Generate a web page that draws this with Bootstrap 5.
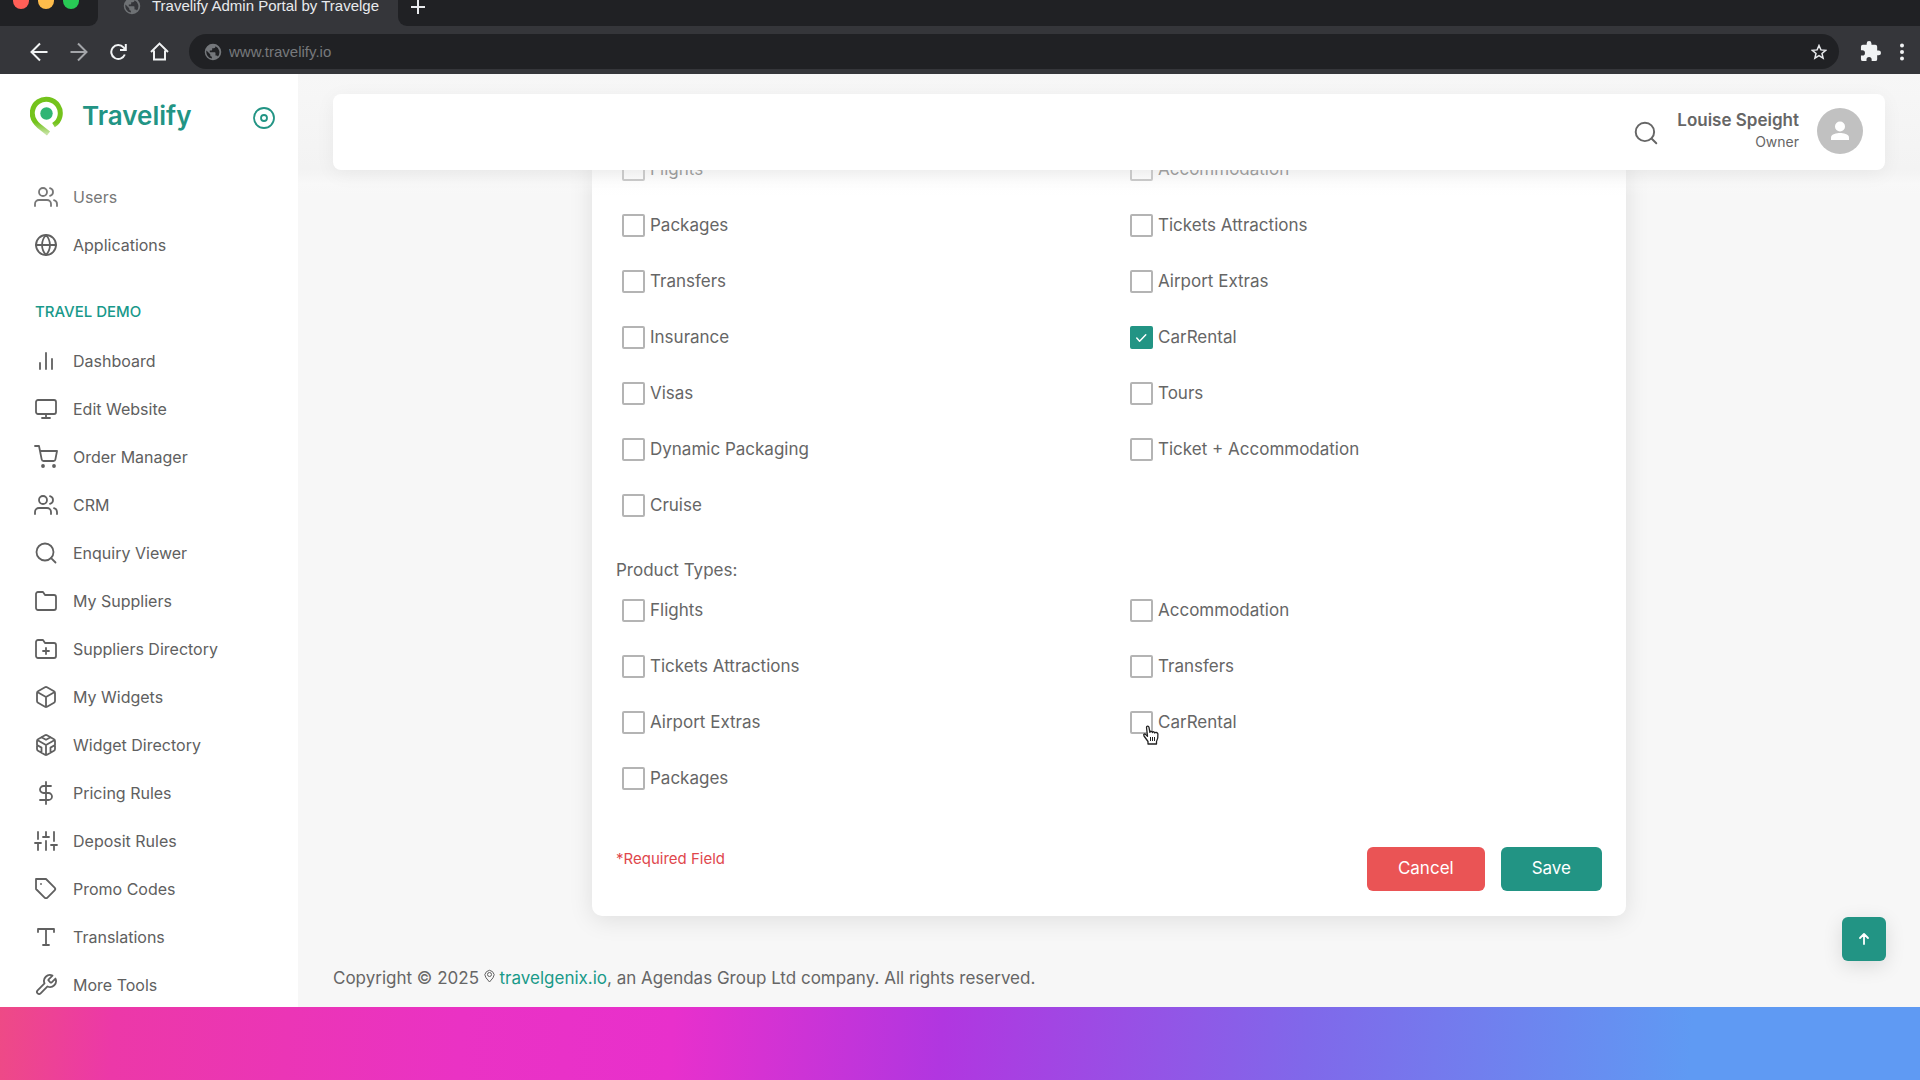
<!DOCTYPE html>
<html lang="en">
<head>
<meta charset="utf-8">
<meta name="viewport" content="width=device-width, initial-scale=1">
<title>Travelify Admin Portal by Travelgenix</title>
<link href="https://cdn.jsdelivr.net/npm/bootstrap@5.3.0/dist/css/bootstrap.min.css" rel="stylesheet">
<style>
  :root { --teal: #229484; --ink: #666; }
  body { font-family: Inter, "Noto Sans", sans-serif; font-size: 17px; line-height: 24px; color: var(--ink); background: #f7f7f7; }
  svg { display: block; flex: none; }
  .stroke-icon { fill: none; stroke: currentColor; stroke-width: 1.8; stroke-linecap: round; stroke-linejoin: round; }

  /* Browser frame */
  .browser { font-family: "Liberation Sans", Arial, sans-serif; background: #35363a; color: #e8eaed; }
  .tab-strip { height: 26px; }
  .strip-start { width: 98px; background: #202124; border-bottom-right-radius: 9px; overflow: hidden; padding-left: 13px; gap: 9px; }
  .strip-end { background: #202124; border-bottom-left-radius: 9px; padding: 0 0 14px 13px; }
  .light { width: 16px; height: 16px; border-radius: 50%; margin-top: -7px; }
  .page-tab { width: 300px; padding: 0 12px 14px 25px; gap: 11px; font-size: 15px; white-space: nowrap; }
  .page-tab span { line-height: 20px; }
  .strip-end button, .tool-row button { background: none; border: 0; padding: 0; color: inherit; }
  .tool-row { height: 48px; padding: 4px 13px 0 30px; }
  .nav-keys { gap: 22px; }
  .address { height: 35px; border-radius: 18px; background: #202124; margin-left: 20px; padding: 0 12px 0 15px; gap: 7px; }
  .address input { background: none; border: 0; outline: 0; padding: 0; font-size: 15px; color: #77797c; }
  .ext { margin-left: 21px; }

  /* Application frame */
  .app { overflow: hidden; }
  .side { width: 298px; background: #fff; flex: none; }
  .brand-row { padding: 22px 22px 0 30px; height: 88px; }
  .brand-name { color: var(--teal); font-size: 26px; line-height: 32px; font-weight: 600; text-decoration: none; margin: 4px 0 0 18px; }
  .brand-row button { background: none; border: 0; padding: 0; margin-top: 10px; color: var(--teal); }
  .side-link { height: 48px; padding: 0 0 0 34px; gap: 15px; color: #606060; font-size: 16px; }
  .side-link:hover { color: var(--teal); }
  .side-link.dim { color: #777; margin-top: 11px; }
  .side-title { color: #18998a; font-size: 15px; line-height: 24px; font-weight: 500; padding: 31px 0 13px 35px; margin: 0; }

  .top-wrap { padding: 20px 35px 26px; background: linear-gradient(#f7f7f7 0%, #f5f5f5 40%, rgba(238,238,238,.45) 78%, rgba(250,250,250,.3) 90%, rgba(255,255,255,0) 100%); z-index: 5; }
  .top-card { height: 76px; background: #fff; border-radius: 8px; padding: 0 22px 3px 0; box-shadow: 0 4px 20px rgba(0,0,0,.05); }
  .person { margin-left: 18px; }
  .person-name { font-size: 17px; font-weight: 600; line-height: 22px; }
  .person-role { font-size: 14px; line-height: 22px; }
  .avatar { width: 46px; height: 46px; background: #c1c1c1; border-radius: 50%; margin-left: 18px; }

  .pane { padding: 67px 35px 0; }
  .form-panel { width: 67%; max-width: 1034px; min-width: 640px; background: #fff; border-radius: 0 0 10px 10px; padding: 0 24px 25px; box-shadow: 0 4px 25px rgba(0,0,0,.1); }
  .choices { --bs-gutter-x: 30px; }
  .choice { height: 56px; min-height: 0; margin: 0; padding: 0 0 0 6px; gap: 5px; }
  .choice .form-check-input { float: none; width: 23px; height: 23px; margin: 0; border: 2px solid #b4b4b4; border-radius: 2px; }
  .choice .form-check-input:checked { background-color: var(--teal); border-color: var(--teal); background-size: 19px; background-image: url("data:image/svg+xml,%3csvg xmlns='http://www.w3.org/2000/svg' viewBox='0 0 20 20'%3e%3cpath fill='none' stroke='%23fff' stroke-linecap='round' stroke-linejoin='round' stroke-width='1.500' d='m5 10.500 3 3.500 6.500-7'/%3e%3c/svg%3e"); }
  .group-title { margin-top: 25px; }
  .form-end { margin-top: 41px; }
  .note { color: #e0474c; font-size: 15px; line-height: 24px; }
  .act { height: 44px; padding: 0 31px; border-radius: 6px; font-size: 17px; color: #fff; border: 0; }
  .act-cancel, .act-cancel:hover { background: #ea5455; color: #fff; }
  .act-save, .act-save:hover { background: var(--teal); color: #fff; }
  .foot { margin-top: 50px; padding-bottom: 17px; }
  .foot a { color: #199a89; text-decoration: none; }
  .foot svg { display: inline-block; vertical-align: 1px; }
  .to-top { right: 34px; bottom: 46px; width: 44px; height: 44px; border: 0; border-radius: 6px; background: var(--teal); color: #fff; box-shadow: 0 5px 20px rgba(0,0,0,.12); }
  .hand { left: 18px; top: 31px; z-index: 2; }
  .band { height: 73px; background: linear-gradient(94deg, #ee4a86 0%, #ec38a8 6%, #ea32c4 24%, #e830cc 35%, #b136e0 49%, #8068ea 68%, #5f9af3 88%); }
</style>
</head>
<body class="vh-100 d-flex flex-column overflow-hidden">

<header class="browser">
  <div class="tab-strip d-flex">
    <div class="strip-start d-flex">
      <span class="light" style="background:#ff5f57"></span>
      <span class="light" style="background:#febc4b"></span>
      <span class="light" style="background:#28ca55"></span>
    </div>
    <div class="page-tab d-flex align-items-center">
      <svg width="18" height="18" viewBox="0 0 24 24" fill="#6e7174"><path d="M12 1a11 11 0 1 0 0 22 11 11 0 0 0 0-22zm-1.500 19.800A9 9 0 0 1 3.300 10l5 5v1.200q.2 1.900 2.200 2zm8-2.700a2.200 2.200 0 0 0-2.100-1.500h-1.100v-3.300a1 1 0 0 0-1-1H7.700v-2.200h2.200a1 1 0 0 0 1-1V6.900h2.200q2.200-.2 2.200-2.200v-.4a9 9 0 0 1 3.200 13.800z"/></svg>
      <span>Travelify Admin Portal by Travelge</span>
    </div>
    <div class="strip-end flex-grow-1 d-flex">
      <button type="button" aria-label="New tab"><svg width="14" height="14" viewBox="0 0 14 14" stroke="#e8eaed" stroke-width="2"><path d="M7 0v14M0 7h14"/></svg></button>
    </div>
  </div>
  <div class="tool-row d-flex align-items-start">
    <div class="d-flex align-items-center flex-grow-1 mt-1">
      <div class="nav-keys d-flex align-items-center">
        <button type="button" aria-label="Back"><svg width="18" height="20" viewBox="0 0 18 20" fill="none" stroke="#f1f3f4" stroke-width="2"><path d="M17.500 10H2M10 1.500 1.500 10l8.500 8.500"/></svg></button>
        <button type="button" aria-label="Forward"><svg width="18" height="20" viewBox="0 0 18 20" fill="none" stroke="#a3a5a9" stroke-width="2"><path d="M.5 10H16M8 1.500l8.500 8.500L8 18.500"/></svg></button>
        <button type="button" aria-label="Reload"><svg width="18" height="18" viewBox="0 0 18 18" fill="none" stroke="#f1f3f4" stroke-width="2"><path d="M14.800 11.500A7 7 0 1 1 13.500 4.300l1.500 1.700"/><path d="M15.800 1v6H10"/></svg></button>
        <button type="button" aria-label="Home"><svg width="19" height="19" viewBox="0 0 19 19" fill="none" stroke="#f1f3f4" stroke-width="2"><path d="M1 10 9.500 1.600 18 10M4 8.500V17.500h11V8.500"/></svg></button>
      </div>
      <div class="address d-flex align-items-center flex-grow-1">
        <svg width="18" height="18" viewBox="0 0 24 24" fill="#74777b"><path d="M12 1a11 11 0 1 0 0 22 11 11 0 0 0 0-22zm-1.500 19.800A9 9 0 0 1 3.300 10l5 5v1.200q.2 1.900 2.200 2zm8-2.700a2.200 2.200 0 0 0-2.100-1.500h-1.100v-3.300a1 1 0 0 0-1-1H7.700v-2.200h2.200a1 1 0 0 0 1-1V6.900h2.200q2.200-.2 2.200-2.200v-.4a9 9 0 0 1 3.200 13.800z"/></svg>
        <input class="flex-grow-1" type="text" aria-label="Address" value="www.travelify.io">
        <svg width="16" height="16" viewBox="0 0 16 16" fill="none" stroke="#e8eaed" stroke-width="1.500"><path d="m8 1.500 1.900 4.400 4.800.4L11 9.500l1.100 4.700L8 11.700l-4.100 2.500L5 9.500 1.300 6.300l4.800-.4z"/></svg>
      </div>
      <button type="button" class="ext" aria-label="Extensions"><svg width="21" height="21" viewBox="1 1 22 22" fill="#f1f3f4"><path d="M20.500 11H19V7a2 2 0 0 0-2-2h-4V3.500a2.500 2.500 0 0 0-5 0V5H4a2 2 0 0 0-2 2v3.800h1.500a2.700 2.700 0 0 1 0 5.400H2V20a2 2 0 0 0 2 2h3.800v-1.500a2.700 2.700 0 0 1 5.400 0V22H17a2 2 0 0 0 2-2v-4h1.500a2.500 2.500 0 0 0 0-5z"/></svg></button>
      <button type="button" class="ms-3" aria-label="Menu"><svg width="10" height="18" viewBox="0 0 10 18" fill="#f1f3f4"><circle cx="5" cy="2.500" r="2"/><circle cx="5" cy="9" r="2"/><circle cx="5" cy="15.500" r="2"/></svg></button>
    </div>
  </div>
</header>

<div class="app d-flex flex-grow-1">
  <aside class="side">
    <div class="brand-row d-flex align-items-start">
      <svg width="34" height="41" viewBox="0 0 34 41" fill="none"><defs><linearGradient id="pin" x1="0" y1="0" x2="0" y2="1"><stop offset=".68" stop-color="#74c31c"/><stop offset="1" stop-color="#c4e2a0"/></linearGradient></defs><path d="M23.500 29.200A14 14 0 1 0 5 25.500Q6.500 28 9 30L18.500 37.500" stroke="url(#pin)" stroke-width="5"/><circle cx="16.500" cy="17.500" r="6.200" fill="#2fb574"/></svg>
      <a class="brand-name me-auto" href="#">Travelify</a>
      <button type="button" aria-label="Collapse menu"><svg class="stroke-icon" width="24" height="24" viewBox="0 0 24 24"><circle cx="12" cy="12" r="10"/><circle cx="12" cy="12" r="3"/></svg></button>
    </div>
    <nav class="nav flex-column flex-nowrap" aria-label="Main menu">
      <a class="nav-link side-link dim d-flex align-items-center" href="#"><svg class="stroke-icon" width="24" height="24" viewBox="0 0 24 24"><path d="M17 21v-2a4 4 0 0 0-4-4H5a4 4 0 0 0-4 4v2"/><circle cx="9" cy="7" r="4"/><path d="M23 21v-2a4 4 0 0 0-3-3.870M16 3.130a4 4 0 0 1 0 7.750"/></svg>Users</a>
      <a class="nav-link side-link d-flex align-items-center" href="#"><svg class="stroke-icon" width="24" height="24" viewBox="0 0 24 24"><circle cx="12" cy="12" r="10"/><path d="M2 12h20M12 2a15.300 15.300 0 0 1 4 10 15.300 15.300 0 0 1-4 10 15.300 15.300 0 0 1-4-10 15.300 15.300 0 0 1 4-10z"/></svg>Applications</a>
      <h2 class="side-title">TRAVEL DEMO</h2>
      <a class="nav-link side-link d-flex align-items-center" href="#"><svg class="stroke-icon" width="24" height="24" viewBox="0 0 24 24"><path d="M18 20V10M12 20V4M6 20v-6"/></svg>Dashboard</a>
      <a class="nav-link side-link d-flex align-items-center" href="#"><svg class="stroke-icon" width="24" height="24" viewBox="0 0 24 24"><rect x="2" y="3" width="20" height="14" rx="2"/><path d="M8 21h8M12 17v4"/></svg>Edit Website</a>
      <a class="nav-link side-link d-flex align-items-center" href="#"><svg class="stroke-icon" width="24" height="24" viewBox="0 0 24 24"><circle cx="9" cy="21" r="1"/><circle cx="20" cy="21" r="1"/><path d="M1 1h4l2.680 13.390a2 2 0 0 0 2 1.610h9.720a2 2 0 0 0 2-1.610L23 6H6"/></svg>Order Manager</a>
      <a class="nav-link side-link d-flex align-items-center" href="#"><svg class="stroke-icon" width="24" height="24" viewBox="0 0 24 24"><path d="M17 21v-2a4 4 0 0 0-4-4H5a4 4 0 0 0-4 4v2"/><circle cx="9" cy="7" r="4"/><path d="M23 21v-2a4 4 0 0 0-3-3.870M16 3.130a4 4 0 0 1 0 7.750"/></svg>CRM</a>
      <a class="nav-link side-link d-flex align-items-center" href="#"><svg class="stroke-icon" width="24" height="24" viewBox="0 0 24 24"><circle cx="11" cy="11" r="8.500"/><path d="m21.500 21.500-4.400-4.400"/></svg>Enquiry Viewer</a>
      <a class="nav-link side-link d-flex align-items-center" href="#"><svg class="stroke-icon" width="24" height="24" viewBox="0 0 24 24"><path d="M22 19a2 2 0 0 1-2 2H4a2 2 0 0 1-2-2V5a2 2 0 0 1 2-2h5l2 3h9a2 2 0 0 1 2 2z"/></svg>My Suppliers</a>
      <a class="nav-link side-link d-flex align-items-center" href="#"><svg class="stroke-icon" width="24" height="24" viewBox="0 0 24 24"><path d="M22 19a2 2 0 0 1-2 2H4a2 2 0 0 1-2-2V5a2 2 0 0 1 2-2h5l2 3h9a2 2 0 0 1 2 2zM12 11v6M9 14h6"/></svg>Suppliers Directory</a>
      <a class="nav-link side-link d-flex align-items-center" href="#"><svg class="stroke-icon" width="24" height="24" viewBox="0 0 24 24"><path d="M21 16V8a2 2 0 0 0-1-1.730l-7-4a2 2 0 0 0-2 0l-7 4A2 2 0 0 0 3 8v8a2 2 0 0 0 1 1.730l7 4a2 2 0 0 0 2 0l7-4A2 2 0 0 0 21 16zM3.270 6.960 12 12.010l8.730-5.050M12 22.080V12"/></svg>My Widgets</a>
      <a class="nav-link side-link d-flex align-items-center" href="#"><svg class="stroke-icon" width="24" height="24" viewBox="0 0 24 24"><path d="M21 16V8a2 2 0 0 0-1-1.730l-7-4a2 2 0 0 0-2 0l-7 4A2 2 0 0 0 3 8v8a2 2 0 0 0 1 1.730l7 4a2 2 0 0 0 2 0l7-4A2 2 0 0 0 21 16zM3.270 6.960 12 12.010l8.730-5.050M12 22.080V12M7.500 4.210l4.500 2.600 4.500-2.600M7.500 19.790V14.600L3 12M21 12l-4.500 2.600v5.190"/></svg>Widget Directory</a>
      <a class="nav-link side-link d-flex align-items-center" href="#"><svg class="stroke-icon" width="24" height="24" viewBox="0 0 24 24"><path d="M12 1v22M17 5H9.500a3.500 3.500 0 0 0 0 7h5a3.500 3.500 0 0 1 0 7H6"/></svg>Pricing Rules</a>
      <a class="nav-link side-link d-flex align-items-center" href="#"><svg class="stroke-icon" width="24" height="24" viewBox="0 0 24 24"><path d="M4 21v-7M4 10V3M12 21v-9M12 8V3M20 21v-5M20 12V3M1 14h6M9 8h6M17 16h6"/></svg>Deposit Rules</a>
      <a class="nav-link side-link d-flex align-items-center" href="#"><svg class="stroke-icon" width="24" height="24" viewBox="0 0 24 24"><path d="m20.590 13.410-7.170 7.170a2 2 0 0 1-2.830 0L2 12V2h10l8.590 8.590a2 2 0 0 1 0 2.820zM7 7h.01"/></svg>Promo Codes</a>
      <a class="nav-link side-link d-flex align-items-center" href="#"><svg class="stroke-icon" width="24" height="24" viewBox="0 0 24 24"><path d="M4 7V4h16v3M9 20h6M12 4v16"/></svg>Translations</a>
      <a class="nav-link side-link d-flex align-items-center" href="#"><svg class="stroke-icon" width="24" height="24" viewBox="0 0 24 24"><path d="M14.700 6.300a1 1 0 0 0 0 1.400l1.600 1.600a1 1 0 0 0 1.400 0l3.770-3.770a6 6 0 0 1-7.940 7.940l-6.910 6.910a2.120 2.120 0 0 1-3-3l6.910-6.910a6 6 0 0 1 7.940-7.940l-3.760 3.760z"/></svg>More Tools</a>
    </nav>
  </aside>

  <main class="flex-grow-1 position-relative overflow-hidden">
    <div class="top-wrap position-absolute top-0 start-0 end-0">
      <div class="top-card d-flex align-items-center justify-content-end">
        <svg class="stroke-icon mt-1" width="26" height="26" viewBox="0 0 24 24"><circle cx="11" cy="11" r="8.500"/><path d="m21.500 21.500-4.400-4.400"/></svg>
        <div class="person text-end">
          <div class="person-name">Louise Speight</div>
          <div class="person-role">Owner</div>
        </div>
        <div class="avatar d-flex align-items-center justify-content-center">
          <svg width="20" height="20" viewBox="0 0 20 20" fill="#fff"><circle cx="10" cy="5.500" r="5"/><path d="M1 19v-2.500C1 13 7 12 10 12s9 1 9 4.500V19z"/></svg>
        </div>
      </div>
    </div>

    <div class="pane">
      <form class="form-panel mx-auto">
        <div class="row choices">
          <div class="col-6"><div class="form-check choice d-flex align-items-center"><input class="form-check-input" type="checkbox" id="a1"><label for="a1">Flights</label></div></div>
          <div class="col-6"><div class="form-check choice d-flex align-items-center"><input class="form-check-input" type="checkbox" id="a2"><label for="a2">Accommodation</label></div></div>
          <div class="col-6"><div class="form-check choice d-flex align-items-center"><input class="form-check-input" type="checkbox" id="a3"><label for="a3">Packages</label></div></div>
          <div class="col-6"><div class="form-check choice d-flex align-items-center"><input class="form-check-input" type="checkbox" id="a4"><label for="a4">Tickets Attractions</label></div></div>
          <div class="col-6"><div class="form-check choice d-flex align-items-center"><input class="form-check-input" type="checkbox" id="a5"><label for="a5">Transfers</label></div></div>
          <div class="col-6"><div class="form-check choice d-flex align-items-center"><input class="form-check-input" type="checkbox" id="a6"><label for="a6">Airport Extras</label></div></div>
          <div class="col-6"><div class="form-check choice d-flex align-items-center"><input class="form-check-input" type="checkbox" id="a7"><label for="a7">Insurance</label></div></div>
          <div class="col-6"><div class="form-check choice d-flex align-items-center"><input class="form-check-input" type="checkbox" id="a8" checked><label for="a8">CarRental</label></div></div>
          <div class="col-6"><div class="form-check choice d-flex align-items-center"><input class="form-check-input" type="checkbox" id="a9"><label for="a9">Visas</label></div></div>
          <div class="col-6"><div class="form-check choice d-flex align-items-center"><input class="form-check-input" type="checkbox" id="a10"><label for="a10">Tours</label></div></div>
          <div class="col-6"><div class="form-check choice d-flex align-items-center"><input class="form-check-input" type="checkbox" id="a11"><label for="a11">Dynamic Packaging</label></div></div>
          <div class="col-6"><div class="form-check choice d-flex align-items-center"><input class="form-check-input" type="checkbox" id="a12"><label for="a12">Ticket + Accommodation</label></div></div>
          <div class="col-6"><div class="form-check choice d-flex align-items-center"><input class="form-check-input" type="checkbox" id="a13"><label for="a13">Cruise</label></div></div>
        </div>
        <div class="group-title">Product Types:</div>
        <div class="row choices">
          <div class="col-6"><div class="form-check choice d-flex align-items-center"><input class="form-check-input" type="checkbox" id="b1"><label for="b1">Flights</label></div></div>
          <div class="col-6"><div class="form-check choice d-flex align-items-center"><input class="form-check-input" type="checkbox" id="b2"><label for="b2">Accommodation</label></div></div>
          <div class="col-6"><div class="form-check choice d-flex align-items-center"><input class="form-check-input" type="checkbox" id="b3"><label for="b3">Tickets Attractions</label></div></div>
          <div class="col-6"><div class="form-check choice d-flex align-items-center"><input class="form-check-input" type="checkbox" id="b4"><label for="b4">Transfers</label></div></div>
          <div class="col-6"><div class="form-check choice d-flex align-items-center"><input class="form-check-input" type="checkbox" id="b5"><label for="b5">Airport Extras</label></div></div>
          <div class="col-6"><div class="form-check choice d-flex align-items-center position-relative"><input class="form-check-input" type="checkbox" id="b6"><label for="b6">CarRental</label>
            <svg class="hand position-absolute" width="18" height="20" viewBox="0 0 17 20" fill="#fff" stroke="#222" stroke-width="1.300" stroke-linejoin="round"><path d="M5.500 19v-2.500L1.500 11c-1-1.800.8-2.600 1.800-1.400L5 11.300 4 2.500C4 .6 6.200.6 6.500 2.300l.9 5c.3-1.500 2.300-1.300 2.500.2.400-1.200 2.200-.9 2.300.5.600-1 2.900-.6 3.200.8.300 3.500 0 5.500-1.400 7.700V19z"/><path d="M8 12v4M10 12v4M12 12v4" stroke-width="1"/></svg>
          </div></div>
          <div class="col-6"><div class="form-check choice d-flex align-items-center"><input class="form-check-input" type="checkbox" id="b7"><label for="b7">Packages</label></div></div>
        </div>
        <div class="form-end d-flex justify-content-between align-items-start">
          <span class="note">*Required Field</span>
          <div class="d-flex gap-3">
            <button type="button" class="btn act act-cancel">Cancel</button>
            <button type="submit" class="btn act act-save">Save</button>
          </div>
        </div>
      </form>
      <footer class="foot">Copyright © 2025 <svg width="11" height="14" viewBox="0 0 11 14" fill="none" stroke="#626262"><path d="M5.500 13 2 8.800a4.500 4.500 0 1 1 7 0z"/><circle cx="5.500" cy="5.500" r="2"/></svg> <a href="#">travelgenix.io</a>, an Agendas Group Ltd company. All rights reserved.</footer>
    </div>
    <button type="button" class="to-top position-absolute d-flex align-items-center justify-content-center" aria-label="Back to top"><svg class="stroke-icon" width="14" height="14" viewBox="0 0 14 14"><path d="M7 12V2M3 6l4-4 4 4"/></svg></button>
  </main>
</div>

<div class="band flex-shrink-0"></div>
<script src="https://cdn.jsdelivr.net/npm/bootstrap@5.3.0/dist/js/bootstrap.bundle.min.js"></script>
</body>
</html>
